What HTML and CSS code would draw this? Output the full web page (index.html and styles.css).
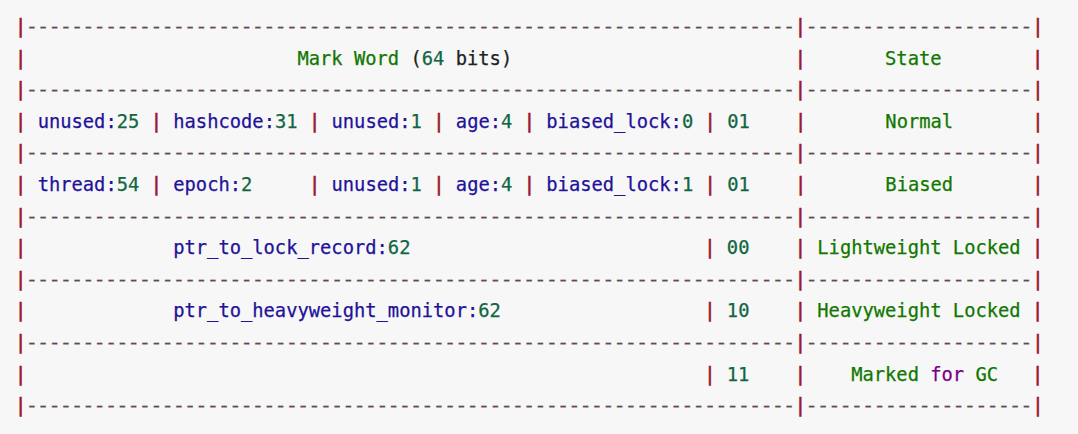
FILE: index.html
```html
<!DOCTYPE html>
<html>
<head>
<meta charset="utf-8">
<link rel="stylesheet" href="styles.css">
</head>
<body>
<pre class="code"><span class="p">|</span><span class="d">--------------------------------------------------------------------</span><span class="p">|</span><span class="d">--------------------</span><span class="p">|</span>
<span class="p">|</span>                        <span class="g">Mark Word</span> <span class="t">(</span><span class="num">64</span> <span class="t">bits)</span>                         <span class="p">|</span>       <span class="g">State</span>        <span class="p">|</span>
<span class="p">|</span><span class="d">--------------------------------------------------------------------</span><span class="p">|</span><span class="d">--------------------</span><span class="p">|</span>
<span class="p">|</span> <span class="n">unused:</span><span class="num">25</span> <span class="p">|</span> <span class="n">hashcode:</span><span class="num">31</span> <span class="p">|</span> <span class="n">unused:</span><span class="num">1</span> <span class="p">|</span> <span class="n">age:</span><span class="num">4</span> <span class="p">|</span> <span class="n">biased_lock:</span><span class="num">0</span> <span class="p">|</span> <span class="num">01</span>    <span class="p">|</span>       <span class="g">Normal</span>       <span class="p">|</span>
<span class="p">|</span><span class="d">--------------------------------------------------------------------</span><span class="p">|</span><span class="d">--------------------</span><span class="p">|</span>
<span class="p">|</span> <span class="n">thread:</span><span class="num">54</span> <span class="p">|</span> <span class="n">epoch:</span><span class="num">2</span>     <span class="p">|</span> <span class="n">unused:</span><span class="num">1</span> <span class="p">|</span> <span class="n">age:</span><span class="num">4</span> <span class="p">|</span> <span class="n">biased_lock:</span><span class="num">1</span> <span class="p">|</span> <span class="num">01</span>    <span class="p">|</span>       <span class="g">Biased</span>       <span class="p">|</span>
<span class="p">|</span><span class="d">--------------------------------------------------------------------</span><span class="p">|</span><span class="d">--------------------</span><span class="p">|</span>
<span class="p">|</span>             <span class="n">ptr_to_lock_record:</span><span class="num">62</span>                          <span class="p">|</span> <span class="num">00</span>    <span class="p">|</span> <span class="g">Lightweight Locked</span> <span class="p">|</span>
<span class="p">|</span><span class="d">--------------------------------------------------------------------</span><span class="p">|</span><span class="d">--------------------</span><span class="p">|</span>
<span class="p">|</span>             <span class="n">ptr_to_heavyweight_monitor:</span><span class="num">62</span>                  <span class="p">|</span> <span class="num">10</span>    <span class="p">|</span> <span class="g">Heavyweight Locked</span> <span class="p">|</span>
<span class="p">|</span><span class="d">--------------------------------------------------------------------</span><span class="p">|</span><span class="d">--------------------</span><span class="p">|</span>
<span class="p">|</span>                                                            <span class="p">|</span> <span class="num">11</span>    <span class="p">|</span>    <span class="g">Marked</span> <span class="k">for</span> <span class="g">GC</span>   <span class="p">|</span>
<span class="p">|</span><span class="d">--------------------------------------------------------------------</span><span class="p">|</span><span class="d">--------------------</span><span class="p">|</span></pre>
</body>
</html>
```

FILE: styles.css
```css
html, body {
  margin: 0;
  padding: 0;
  background: #f7f7f7;
}

.code {
  margin: 0;
  padding: 11px 0 0 15px;
  font-family: "DejaVu Sans Mono", "Liberation Mono", monospace;
  font-size: 18.77px;
  line-height: 31.6px;
  color: #333333;
  white-space: pre;
  -webkit-text-stroke: 0.25px currentColor;
}

.p {
  color: #99142f;
  -webkit-text-stroke: 0.6px currentColor;
}

.d {
  color: #5e4a52;
  font-family: "Liberation Mono", "DejaVu Sans Mono", monospace;
  letter-spacing: 0.04px;
  line-height: 0;
  -webkit-text-stroke: 0.3px currentColor;
}

.g { color: #117700; }
.n { color: #221199; }
.num { color: #116644; }
.k { color: #770088; }
.t { color: #222222; }
```
